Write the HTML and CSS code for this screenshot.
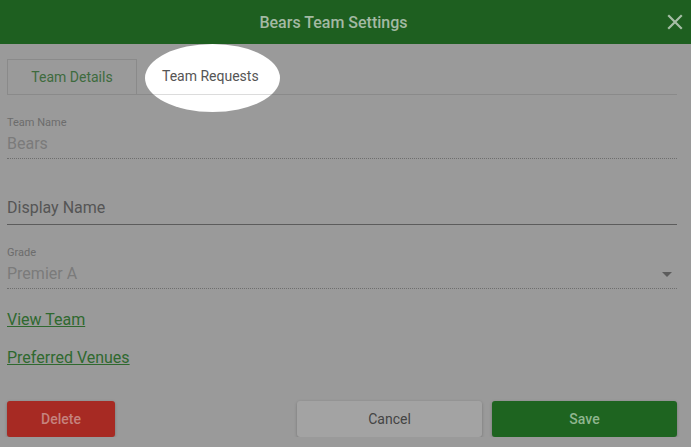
FILE: index.html
```html
<!DOCTYPE html>
<html lang="en">
<head>
  <meta charset="UTF-8">
  <title>Bears Team Settings</title>
  <link rel="stylesheet" href="styles.css">
</head>
<body>
  <div class="header">
    <span class="title">Bears Team Settings</span>
    <button class="close" aria-label="Close">
      <svg width="16" height="16" viewBox="0 0 16 16"><path d="M2 2 L14 14 M14 2 L2 14" stroke="#a6bea6" stroke-width="2.2" stroke-linecap="square"/></svg>
    </button>
  </div>

  <div class="spotlight"></div>

  <div class="content">
    <div class="tabs">
      <div class="tab active">Team Details</div>
      <div class="tab lit">Team Requests</div>
    </div>

    <div class="field">
      <div class="label">Team Name</div>
      <div class="value muted">Bears</div>
    </div>
    <div class="field editable">
      <div class="label"></div>
      <div class="value">Display Name</div>
    </div>
    <div class="field">
      <div class="label">Grade</div>
      <div class="value muted select">Premier A <span class="caret"></span></div>
    </div>

    <a class="link first" href="#">View Team</a>
    <a class="link" href="#">Preferred Venues</a>

    <div class="actions">
      <button class="btn delete">Delete</button>
      <div class="right">
        <button class="btn cancel">Cancel</button>
        <button class="btn save">Save</button>
      </div>
    </div>
  </div>
</body>
</html>
```

FILE: styles.css
```css
body { margin: 0; background: #9a9a9a; font-family: Roboto, "Liberation Sans", sans-serif; }
.header { height: 44px; background: #1e5f20; display: flex; align-items: center; justify-content: center; position: relative; padding-right: 24px; }
.title { color: #a3b9a3; font-size: 16px; font-weight: 500; }
.close { position: absolute; right: 8px; top: 14px; background: none; border: 0; padding: 0; width: 16px; height: 16px; }
.close svg { display: block; }

.spotlight { position: absolute; left: 145px; top: 44px; width: 135px; height: 68px; border-radius: 50%;
  background: linear-gradient(to bottom, #fff 50px, #dcdcdc 50px, #dcdcdc 51px, #fff 51px); }

.content { padding: 0 14px 0 7px; }
.tabs { display: flex; margin-top: 15px; border-bottom: 1px solid #8a8a8a; }
.tab { height: 34px; line-height: 34px; font-size: 14px; padding: 0 24px 0 25px; }
.tab.active { width: 128px; padding: 0; text-align: center; border: 1px solid #8a8a8a; border-bottom: 0; color: #3e6b3e; }
.tab.lit { position: relative; z-index: 1; color: #555; }

.field { margin-top: 20px; border-bottom: 1px dotted #6e6e6e; padding-bottom: 3px; }
.field.editable { border-bottom: 1px solid #5c5c5c; padding-bottom: 5px; }
.label { font-size: 11px; line-height: 14px; height: 14px; padding-top: 1px; color: #6c6c6c; }
.value { font-size: 16px; line-height: 22px; margin-top: 3px; color: #555; }
.value.muted { color: #7b7b7b; }
.select { display: flex; justify-content: space-between; align-items: center; }
.caret { width: 0; height: 0; border-left: 5px solid transparent; border-right: 5px solid transparent; border-top: 5px solid #5c5c5c; margin-right: 5px; }

.link { display: block; width: max-content; font-size: 16px; line-height: 22px; color: #2f692f; text-decoration: underline; margin-top: 16px; }
.link.first { margin-top: 20px; }

.actions { display: flex; justify-content: space-between; margin-top: 32px; }
.right { display: flex; gap: 10px; }
.btn { height: 36px; border: 0; border-radius: 3px; font-family: inherit; font-size: 14px; box-shadow: 0 1px 3px rgba(0,0,0,0.25); }
.delete { width: 108px; background: #a72a23; color: #c5837e; font-weight: 500; }
.cancel { width: 185px; background: #a3a3a3; color: #444; }
.save { width: 185px; background: #1e6420; color: #8fb68f; font-weight: 500; }
```
